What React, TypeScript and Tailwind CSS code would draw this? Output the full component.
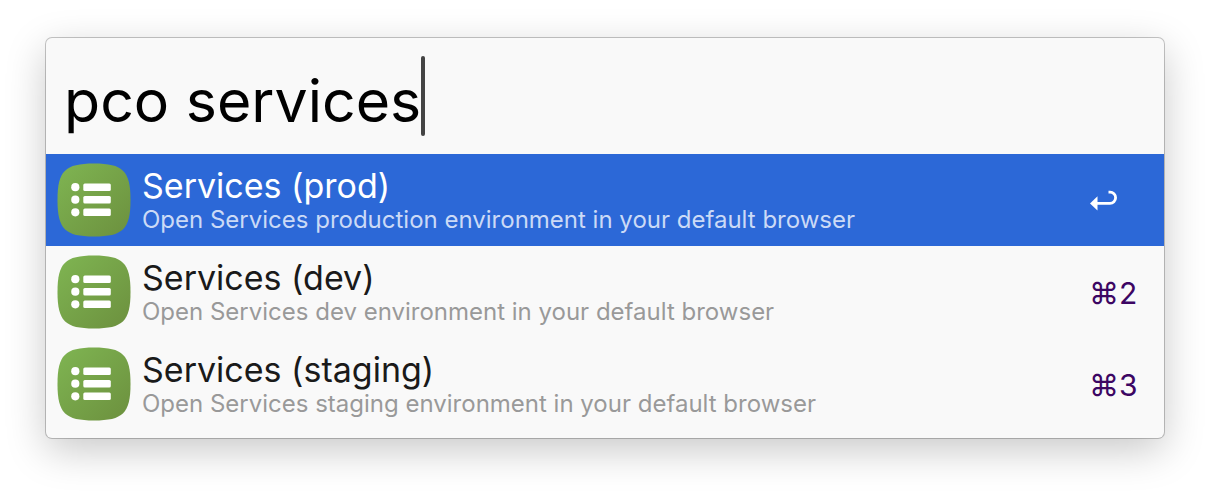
import { useState } from "react";

type Result = { title: string; subtitle: string; shortcut: string };

const results: Result[] = [
  {
    title: "Services (prod)",
    subtitle: "Open Services production environment in your default browser",
    shortcut: "return",
  },
  {
    title: "Services (dev)",
    subtitle: "Open Services dev environment in your default browser",
    shortcut: "⌘2",
  },
  {
    title: "Services (staging)",
    subtitle: "Open Services staging environment in your default browser",
    shortcut: "⌘3",
  },
];

function ServicesIcon() {
  return (
    <svg viewBox="0 0 74 74" className="size-[74px] shrink-0" aria-hidden="true">
      <defs>
        <linearGradient id="tile" x1="0" y1="0" x2="1" y2="1">
          <stop offset="0" stopColor="#7fb552" />
          <stop offset="1" stopColor="#6c903e" />
        </linearGradient>
      </defs>
      <path
        d="M37 .5C66 .5 73.500 8 73.500 37S66 73.500 37 73.500S.5 66 .5 37S8 .5 37 .5Z"
        fill="url(#tile)"
      />
      <g fill="#fff">
        <circle cx="18.300" cy="24.200" r="4.100" />
        <circle cx="18.300" cy="36.700" r="4.100" />
        <circle cx="18.300" cy="49.300" r="4.100" />
        <rect x="26.300" y="20.400" width="27.500" height="7.500" rx="1.500" />
        <rect x="26.300" y="33" width="27.500" height="7.500" rx="1.500" />
        <rect x="26.300" y="45.600" width="27.500" height="7.500" rx="1.500" />
      </g>
    </svg>
  );
}

function ReturnIcon() {
  return (
    <svg viewBox="0 0 28 24" className="h-6 w-7" role="img" aria-label="Return">
      <path d="M19.500 3.200H21a5.600 5.600 0 0 1 0 11.200H8" fill="none" stroke="#fff" strokeWidth="2.800" />
      <path d="M1 14.400 8.500 7.200v14.400Z" fill="#fff" />
    </svg>
  );
}

export default function App() {
  const [query, setQuery] = useState("pco services");
  const [selected, setSelected] = useState(0);

  return (
    <div className="min-h-screen bg-white px-[46px] pt-[38px] pb-[54px] font-['Inter',sans-serif]">
      <main className="overflow-hidden rounded-md bg-[#f9f9f9] pb-2 shadow-[0_0_0_1px_rgba(0,0,0,0.22),0_12px_40px_rgba(0,0,0,0.22)]">
        <div className="flex h-[116px] items-center pl-[18px]">
          <input
            aria-label="Search"
            value={query}
            onChange={(event) => setQuery(event.target.value)}
            className="field-sizing-content h-20 bg-transparent p-0 pt-2 text-[59px] leading-18 font-normal text-black caret-transparent outline-none"
          />
          <span className="h-20 w-1 shrink-0 rounded-full bg-[#444]" />
        </div>
        <ul>
          {results.map((result, index) => {
            const active = index === selected;
            return (
              <li key={result.title}>
                <button
                  type="button"
                  onClick={() => setSelected(index)}
                  className={`flex h-[92px] w-full items-center gap-[11px] pr-7 pl-[11px] text-left ${active ? "bg-[#2c68d7]" : ""}`}
                >
                  <ServicesIcon />
                  <span className="flex min-w-0 flex-1 flex-col pt-px">
                    <span className={`text-[34px] leading-[39px] ${active ? "text-white" : "text-[#1a1a1a]"}`}>
                      {result.title}
                    </span>
                    <span className={`text-[24px] leading-[30px] ${active ? "text-[#cbdaf6]" : "text-[#999]"}`}>
                      {result.subtitle}
                    </span>
                  </span>
                  <kbd className="flex w-[47px] shrink-0 pt-0.5 font-['Inter',sans-serif] text-[30px] leading-10 whitespace-nowrap text-[#3c0663]">
                    {result.shortcut === "return" ? <ReturnIcon /> : result.shortcut}
                  </kbd>
                </button>
              </li>
            );
          })}
        </ul>
      </main>
    </div>
  );
}
